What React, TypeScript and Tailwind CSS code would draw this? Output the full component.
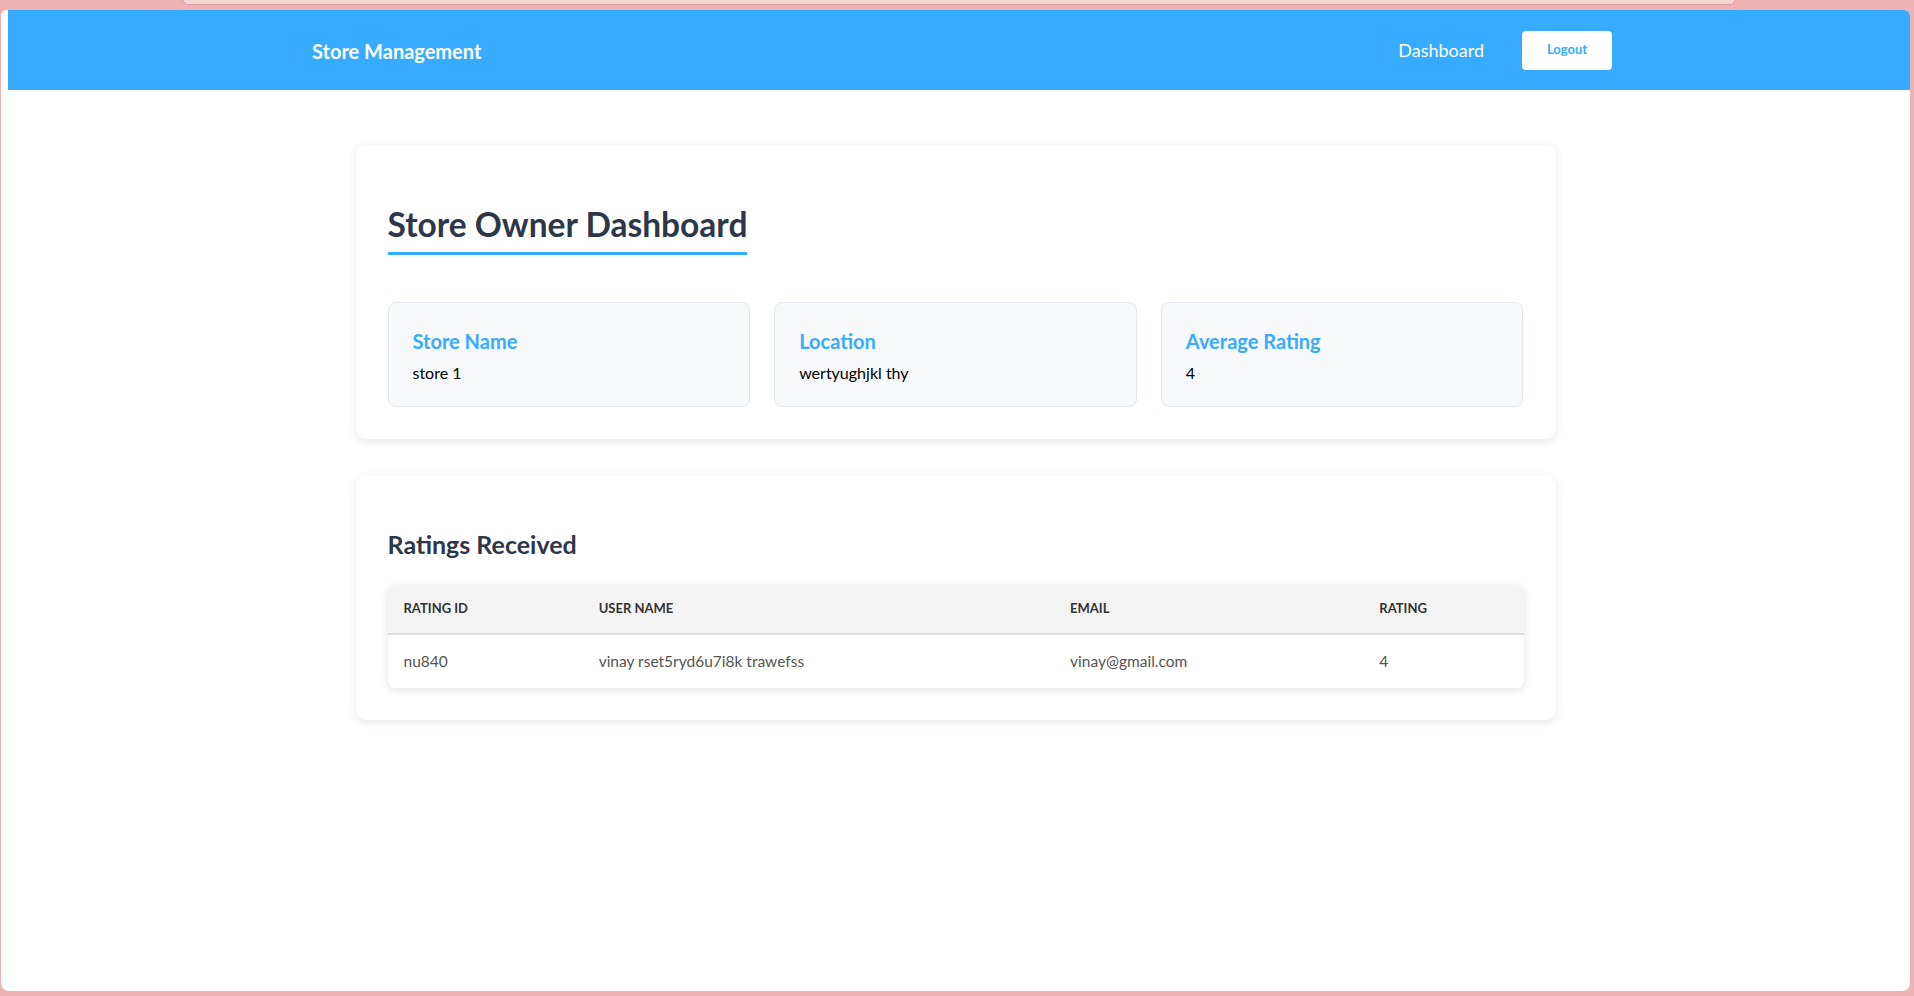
import React from "react";

interface Rating {
  id: string;
  userName: string;
  email: string;
  rating: number;
}

const ratings: Rating[] = [
  { id: "nu840", userName: "vinay rset5ryd6u7i8k trawefss", email: "vinay@gmail.com", rating: 4 },
];

const stats = [
  { label: "Store Name", value: "store 1" },
  { label: "Location", value: "wertyughjkl thy" },
  { label: "Average Rating", value: "4" },
];

const Navbar = () => (
  <nav className="ml-[7px] pl-[6px] h-[80px] bg-[#36abff] flex items-center">
    <div className="w-[1300px] mx-auto flex items-center justify-between">
      <span className="text-white text-[20px] font-bold pt-[2px]">Store Management</span>
      <div className="flex items-center gap-[38px]">
        <a className="text-white text-[18px] pt-[1px]">Dashboard</a>
        <button className="w-[90px] h-[39px] bg-white rounded-[4px] text-[#36abff] text-[13px] font-bold">
          Logout
        </button>
      </div>
    </div>
  </nav>
);

const StoreOwnerDashboard = () => (
  <main className="w-[1200px] mx-auto pt-[55px] flex flex-col gap-[36px]">
    <section className="bg-white rounded-[10px] shadow-[0_2px_10px_rgba(0,0,0,0.1)] px-[32px] pt-[32px] pb-[32px]">
      <h2 className="inline-block mt-[27px] pb-[8px] border-b-[3px] border-[#36abff] text-[33.5px] leading-[40px] font-bold text-[#2d3748]">
        Store Owner Dashboard
      </h2>
      <div className="mt-[47px] grid grid-cols-3 gap-[24px]">
        {stats.map((s) => (
          <div key={s.label} className="bg-[#f7f9fb] border border-[#e2e8f0] rounded-[8px] px-[24px] pt-[26px] pb-[22px]">
            <h3 className="text-[20px] leading-[24px] font-bold text-[#36abff]">{s.label}</h3>
            <p className="mt-[9px] text-[16px] leading-[22px] text-black">{s.value}</p>
          </div>
        ))}
      </div>
    </section>

    <section className="bg-white rounded-[10px] shadow-[0_2px_10px_rgba(0,0,0,0.1)] px-[32px] pt-[32px] pb-[32px]">
      <h2 className="mt-[22px] text-[25px] leading-[30px] font-bold text-[#2d3748]">Ratings Received</h2>
      <div className="mt-[26px] rounded-[8px] overflow-hidden shadow-[0_2px_8px_rgba(0,0,0,0.12)]">
        <table className="w-full table-fixed border-collapse">
          <colgroup>
            <col className="w-[195px]" />
            <col className="w-[471px]" />
            <col className="w-[309px]" />
            <col className="w-[160px]" />
          </colgroup>
          <thead>
            <tr className="bg-[#f4f4f4] border-b-2 border-[#dddddd]">
              {["Rating ID", "User Name", "Email", "Rating"].map((h) => (
                <th key={h} className="h-[49px] px-[16px] text-left text-[13px] font-bold uppercase text-[#333333]">
                  {h}
                </th>
              ))}
            </tr>
          </thead>
          <tbody>
            {ratings.map((r) => (
              <tr key={r.id} className="bg-white">
                <td className="h-[54px] px-[16px] text-[15.5px] text-[#555555]">{r.id}</td>
                <td className="h-[54px] px-[16px] text-[15.5px] text-[#555555]">{r.userName}</td>
                <td className="h-[54px] px-[16px] text-[15.5px] text-[#555555]">{r.email}</td>
                <td className="h-[54px] px-[16px] text-[15.5px] text-[#555555]">{r.rating}</td>
              </tr>
            ))}
          </tbody>
        </table>
      </div>
    </section>
  </main>
);

export default function App() {
  return (
    <div className="relative h-[996px] bg-[#eeb2b2] pt-[10px] pb-[5px] pl-[1px] pr-[4px] overflow-hidden font-['Lato',sans-serif]">
      {/* browser tab strip */}
      <div className="absolute left-[183px] top-0 w-[1552px] h-[5px] bg-[#f6d6d3] rounded-b-[7px] border-b border-x border-[#d9a3a3]" />
      <div className="h-full bg-white rounded-t-[6px] rounded-b-[8px] overflow-hidden">
        <Navbar />
        <StoreOwnerDashboard />
      </div>
    </div>
  );
}
